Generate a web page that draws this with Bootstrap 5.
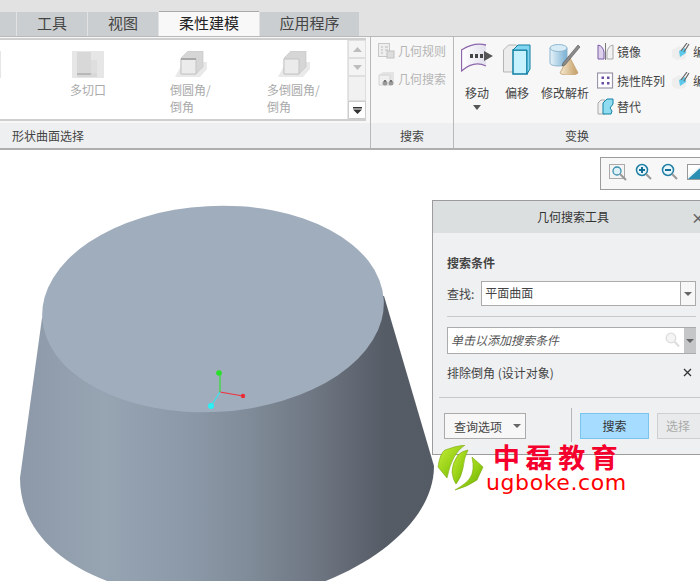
<!DOCTYPE html>
<html lang="zh">
<head>
<meta charset="utf-8">
<title>柔性建模</title>
<link href="https://cdn.jsdelivr.net/npm/bootstrap@5.3.0/dist/css/bootstrap.min.css" rel="stylesheet">
<style>
html,body{height:581px;overflow:hidden;background:#fff}
body{font:12px/17px "Noto Sans CJK SC","Liberation Sans",sans-serif;color:#444}
.app{width:700px;height:581px;overflow:hidden}
.tabstrip{height:37px;flex:none;background:#e2e2e2;padding-top:12px;border-bottom:1px solid #b9b9b9;gap:1px}
.tabx{height:24px;background:#cbced1;font-size:15px;line-height:22px;text-align:center;color:#444}
.tabx.on{background:#f8f8f8;color:#222;border-top:1px solid #a9a9a9;height:25px;margin-top:-1px}
.w0{width:16px}.w1{width:70px}.w2{width:100px}.w3{width:99px}
.rib{height:113px;flex:none;background:#f7f7f7;border-bottom:2px solid #aeaeae}
.grp{border-right:1px solid #b9b9b9;flex:none}
.g1{width:371px}.g2{width:83px}.g3{width:246px;border-right:0;overflow:hidden}
.grpb{height:86px}
.grpf{height:25px;background:#eeeff0;text-align:center;line-height:25px}
.g1 .grpf{text-align:left;padding-left:12px}
.gal{width:366px;height:83px;margin-top:1px;border-top:2px solid #cfcfcf;border-bottom:2px solid #cfcfcf;background:#fff}
.gitems{width:347px;padding:11px 0 0 70px;color:#aaa;position:relative}
.gitems::before{content:"";position:absolute;left:0;top:11px;width:1px;height:27px;background:#e6e6e6}
.gi svg{display:block;margin-bottom:3px}
.a1{width:100px}.a1 svg{margin-left:2px}
.a2{width:97px}.a2 svg{margin-left:5px}
.a3{width:70px}.a3 svg{margin-left:11px}
.gi div{white-space:nowrap}
.sbar{width:19px;border-left:1px solid #e6e6e6}
.sb{background:#f4f4f4;border:1px solid #dedede;height:18px;flex:none}
.sb.thumb{background:#f1f1f1;flex:1}
.sb.last{background:#fff;border-color:#ccc}
.sb svg{display:block}
.sm{gap:11px;padding:5px 0 0 7px;color:#b5b5b5}
.lrow{gap:3px;height:17px;white-space:nowrap}
.lrow svg{flex:none}
.bigs{padding-top:6px;flex:none}
.bg{text-align:center;white-space:nowrap}
.bg svg{display:block;margin:0 auto 9px}
.b1{width:32px;margin-left:7px;margin-right:10px}
.b2{width:28px;margin-right:10px}
.b3{width:48px;margin-right:8px}
.cl .lrow{height:28px}
.cl .lrow.r2{height:30px}
.cl .lrow.r3{height:22px}
.cl1{width:75px;flex:none}
.stage{height:431px;overflow:hidden}
.cad{display:block}
.vbar{position:absolute;left:600px;top:7px;width:110px;height:33px;border:1px solid #9c9c9c;background:#f7f7f7;padding:5px 0 0 8px;gap:8px}
.dlg{position:absolute;left:432px;top:50px;width:282px;height:255px;border:1px solid #9c9c9c;background:#eef0f2}
.dh{height:32px;background:#dcdfe0;text-align:center;line-height:32px;color:#333}
.dx{position:absolute;left:258px;top:8px;font-size:14px;line-height:16px;font-weight:700;color:#666}
.db{padding:21px 17px 0 14px}
.gp10{margin-top:10px}
.fld{background:#fff;border:1px solid #ababab;height:25px}
.fld.tall{height:27px}
.fld span{padding-left:3px;line-height:22px}
.fld.tall span{line-height:23px}
.lbl{flex:none;margin-right:7px;margin-top:-1px}
.arw{width:15px;border-left:1px solid #ababab;background:#f7f7f7}
.tri{width:0;height:0;border-left:4px solid transparent;border-right:4px solid transparent;border-top:4px solid #666;display:inline-block}
.rule{height:1px;background:#c6c8ca}
.ph{font-style:italic;color:#555}
.gcell{width:12px;background:#c4c6c8;margin-right:-1px}
.dr2{margin:16px 0 15px 6px}
.dfoot{padding-left:11px}
.qbtn{width:82px;height:26px;flex:none;background:#f7f7f7;border:1px solid #ababab;padding:0 4px 0 9px;line-height:23px}
.vs{width:1px;height:34px;flex:none;background:#b4b6b8;margin:-5px 8px 0 45px}
.sbtn{width:69px;height:26px;flex:none;background:#a5dcff;border:1px solid #7cc4f0;text-align:center;line-height:23px;color:#333}
.dbtn{width:60px;height:26px;flex:none;margin-left:8px;background:#e9eaeb;border:1px solid #cfcfcf;text-align:left;padding-left:8px;line-height:23px;color:#aaa}
.lg{position:absolute;left:437px;top:295px;width:48px;height:46px}
.lcn{position:absolute;left:493px;top:288px;font-size:27px;line-height:38px;font-weight:700;letter-spacing:5.6px;color:#f5002d;white-space:nowrap}
.lur{position:absolute;left:486px;top:318px;font-family:"DejaVu Sans",sans-serif;font-size:22px;line-height:30px;letter-spacing:.6px;color:#f00;white-space:nowrap}
</style>
</head>
<body>
<div class="app d-flex flex-column">
  <div class="tabstrip d-flex">
    <div class="tabx w0"></div>
    <div class="tabx w1">工具</div>
    <div class="tabx w1">视图</div>
    <div class="tabx w2 on">柔性建模</div>
    <div class="tabx w3">应用程序</div>
  </div>
  <div class="rib d-flex">
    <div class="grp g1 d-flex flex-column">
      <div class="grpb">
        <div class="gal d-flex">
          <div class="gitems d-flex">
            <div class="gi a1">
              <svg width="32" height="27" viewBox="0 0 32 27"><rect width="32" height="27" fill="#e6e6e6"/><path d="M5 1h14v8h6v17H5z" fill="#d8d8d8"/><path d="M5 22h14v2H5z" fill="#b8b8b8"/><path d="M19 9h6v13h-6z" fill="#dedede"/></svg>
              <div>多切口</div>
            </div>
            <div class="gi a2">
              <svg width="32" height="27" viewBox="0 0 32 27"><path d="M0 26l8-15h24v7l-7 8z" fill="#e9e9e9"/><path d="M6 7l7-7h15v16l-7 7H6z" fill="#d6d6d6" stroke="#c4c4c4" stroke-width=".6"/><path d="M6 8h15v15H6z" fill="#ebebeb" stroke="#c4c4c4"/><path d="M6 8h15" stroke="#a9a9a9" stroke-width="2"/></svg>
              <div>倒圆角/</div><div>倒角</div>
            </div>
            <div class="gi a3">
              <svg width="32" height="27" viewBox="0 0 32 27"><path d="M0 26l8-15h24v7l-7 8z" fill="#e9e9e9"/><path d="M6 7l7-7h15v16l-7 7H6z" fill="#d6d6d6" stroke="#c4c4c4" stroke-width=".6"/><path d="M6 8h15v15H6z" fill="#ebebeb" stroke="#c4c4c4"/></svg>
              <div>多倒圆角/</div><div>倒角</div>
            </div>
          </div>
          <div class="sbar d-flex flex-column">
            <div class="sb d-flex align-items-center justify-content-center"><svg width="9" height="5"><path d="M0 5l4.500-5L9 5z" fill="#bdbdbd"/></svg></div>
            <div class="sb d-flex align-items-center justify-content-center"><svg width="9" height="5"><path d="M0 0l4.500 5L9 0z" fill="#bdbdbd"/></svg></div>
            <div class="sb thumb"></div>
            <div class="sb last d-flex align-items-center justify-content-center"><svg width="9" height="7"><path d="M0 0h9v1.500H0zM0 2.500h9L4.500 7z" fill="#333"/></svg></div>
          </div>
        </div>
      </div>
      <div class="grpf">形状曲面选择</div>
    </div>
    <div class="grp g2 d-flex flex-column">
      <div class="grpb sm d-flex flex-column">
        <div class="lrow d-flex align-items-center"><svg width="17" height="16" viewBox="0 0 17 16"><rect x=".5" y=".5" width="11" height="13" fill="#eee" stroke="#c8c8c8"/><path d="M3 4h2M3 7h2M3 10h2M7 4h3M7 7h3" stroke="#bbb"/><rect x="9" y="8" width="7" height="7" fill="#ddd" stroke="#c2c2c2"/></svg><span>几何规则</span></div>
        <div class="lrow d-flex align-items-center"><svg width="17" height="16" viewBox="0 0 17 16"><path d="M1 4l4-3h11v10l-4 3H1z" fill="#e4e4e4"/><path d="M1 4h11v10H1z" fill="#efefef" stroke="#d4d4d4"/><circle cx="7" cy="12" r="2.500" fill="#999"/><circle cx="13" cy="12" r="2.500" fill="#999"/><path d="M6 9h2v2H6zM12 9h2v2h-2z" fill="#777"/></svg><span>几何搜索</span></div>
      </div>
      <div class="grpf">搜索</div>
    </div>
    <div class="grp g3 d-flex flex-column">
      <div class="grpb d-flex">
        <div class="bigs d-flex">
          <div class="bg b1">
            <svg width="32" height="32" viewBox="0 0 32 32"><defs><linearGradient id="mv" x1="0" x2="1"><stop offset="0" stop-color="#fff"/><stop offset="1" stop-color="#e2e0ec"/></linearGradient></defs><path d="M.5 7Q13-1 25 2V23Q13 17 .5 28z" fill="url(#mv)"/><path d="M25 2Q13-1 .5 7V28Q13 17 25 23" fill="none" stroke="#8d67ad" stroke-width="1.300"/><path d="M9 11h3v4H9zM14 11h3v4h-3zM19 11h3v4h-3z" fill="#444"/><path d="M23 8l9 5-9 5z" fill="#555"/></svg>
            <div>移动</div>
            <svg class="mt-1" width="8" height="5"><path d="M0 0h8L4 5z" fill="#555"/></svg>
          </div>
          <div class="bg b2">
            <svg width="28" height="32" viewBox="0 0 28 32"><path d="M.5 7l5-5h8v27H.5z" fill="#ececec" stroke="#b5b5b5"/><path d="M10 7h14v24H10z" fill="#c6f2ff" stroke="#0f7fa3" stroke-width="1.500"/><path d="M10 7l5-5h12v24l-3 5V7z" fill="#82d5ee" stroke="#0f7fa3"/></svg>
            <div>偏移</div>
          </div>
          <div class="bg b3">
            <svg width="32" height="32" viewBox="0 0 32 32"><defs><linearGradient id="cy" x1="0" x2="1"><stop offset="0" stop-color="#e6f3fa"/><stop offset="1" stop-color="#79afd2"/></linearGradient><linearGradient id="cn" x1="0" x2="1"><stop offset="0" stop-color="#f7ead2"/><stop offset="1" stop-color="#c39c63"/></linearGradient></defs><path d="M1 5v15c0 4 17 4 17 0V5z" fill="url(#cy)" stroke="#8fb6cf"/><ellipse cx="9.500" cy="5" rx="8.500" ry="3.500" fill="#d7ecf7" stroke="#8fb6cf"/><path d="M11 30L20 13l9 17c-3 3-15 3-18 0z" fill="url(#cn)" stroke="#c9ab7c"/><path d="M14 20L29 2l2 2-15 18-3 1z" fill="#8a8a8a" stroke="#555" stroke-width=".6"/></svg>
            <div>修改解析</div>
          </div>
        </div>
        <div class="cl cl1 d-flex flex-column">
          <div class="lrow d-flex align-items-center"><svg width="17" height="17" viewBox="0 0 17 17"><path d="M1 2q5 1 6 7v7H1z" fill="#dcd2ec" stroke="#7a5aa6"/><path d="M16 2q-5 1-6 7v7h6z" fill="#f2f2f2" stroke="#a8a8a8"/><path d="M8.500 0v17" stroke="#777"/></svg><span>镜像</span></div>
          <div class="lrow r2 d-flex align-items-center"><svg width="17" height="17" viewBox="0 0 17 17"><rect x=".5" y="1" width="15" height="15" fill="#fff" stroke="#9a94a8" stroke-width="1.200"/><path d="M4.500 4.500h2.500v2.500H4.500zM10 4.500h2.500v2.500H10zM4.500 10h2.500v2.500H4.500zM10 10h2.500v2.500H10z" fill="#6d4ea5"/></svg><span>挠性阵列</span></div>
          <div class="lrow r3 d-flex align-items-center"><svg width="17" height="17" viewBox="0 0 17 17"><path d="M1 5l3-3h4v14H1z" fill="#eee" stroke="#aaa"/><path d="M6 5l4-4h6v5l-3 4 2 3-1 3H6z" fill="#8fdcf0" stroke="#1382a5"/></svg><span>替代</span></div>
        </div>
        <div class="cl d-flex flex-column">
          <div class="lrow d-flex align-items-center"><svg width="18" height="17" viewBox="0 0 18 17"><path d="M0 7l7-4 8 5-2 8-8 1-5-3z" fill="#eee"/><path d="M7 8l6-3 1 5-6 4z" fill="#5cc9ea"/><path d="M9 8l6-8M12 9l5-8" stroke="#666" stroke-width="1.200"/></svg><span>编辑倒圆角</span></div>
          <div class="lrow r2 d-flex align-items-center"><svg width="18" height="17" viewBox="0 0 18 17"><path d="M0 7l7-4 8 5-2 8-8 1-5-3z" fill="#eee"/><path d="M7 8l6-3 1 5-6 4z" fill="#5cc9ea"/><path d="M9 8l6-8M12 9l5-8" stroke="#666" stroke-width="1.200"/></svg><span>编辑倒角</span></div>
        </div>
      </div>
      <div class="grpf">变换</div>
    </div>
  </div>
  <div class="stage position-relative">
    <svg class="cad" width="700" height="431" viewBox="0 150 700 431">
      <defs>
        <linearGradient id="side" gradientUnits="userSpaceOnUse" x1="20" y1="0" x2="435" y2="0">
          <stop offset="0" stop-color="#8d99a8"/>
          <stop offset=".2" stop-color="#97a4b2"/>
          <stop offset=".4" stop-color="#8c99a8"/>
          <stop offset=".55" stop-color="#808c99"/>
          <stop offset=".72" stop-color="#6d7581"/>
          <stop offset=".88" stop-color="#565c66"/>
          <stop offset="1" stop-color="#555b65"/>
        </linearGradient>
      </defs>
      <path d="M42 318L20 478C20 560 120 601 227 601C320 601 434 540 434 466L384 296z" fill="url(#side)"/>
      <ellipse cx="213" cy="309" rx="171" ry="103" transform="rotate(-3 213 309)" fill="#a0adbd"/>
      <path d="M220 392V374" stroke="#2fe02f" stroke-width="1.200"/>
      <circle cx="219" cy="373" r="2.800" fill="#25e025"/>
      <path d="M220 392l23 4" stroke="#f0323c" stroke-width="1.200"/>
      <circle cx="243" cy="396" r="2.200" fill="#ee2a36"/>
      <path d="M220 392l-9 14" stroke="#35e6f0" stroke-width="1.200"/>
      <circle cx="211" cy="406" r="3" fill="#28f0f5"/>
    </svg>

    <div class="vbar d-flex">
      <svg width="18" height="19" viewBox="0 0 18 19"><rect x=".5" y="1.500" width="15" height="14" fill="#f4f4f4" stroke="#aaa"/><circle cx="8" cy="8" r="4" fill="#dff1f8" stroke="#3a8fb0" stroke-width="1.300"/><path d="M11 11l6 6" stroke="#999" stroke-width="2"/></svg>
      <svg width="18" height="18" viewBox="0 0 18 18"><circle cx="7" cy="7" r="5.500" fill="#e9f6fb" stroke="#1f7fa5" stroke-width="1.500"/><path d="M4 7h6M7 4v6" stroke="#156f94" stroke-width="2"/><path d="M11 11l5 5" stroke="#999" stroke-width="2"/></svg>
      <svg width="18" height="18" viewBox="0 0 18 18"><circle cx="7" cy="7" r="5.500" fill="#e9f6fb" stroke="#1f7fa5" stroke-width="1.500"/><path d="M4 7h6" stroke="#156f94" stroke-width="2"/><path d="M11 11l5 5" stroke="#999" stroke-width="2"/></svg>
      <svg width="18" height="18" viewBox="0 0 18 18"><rect x=".5" y="1.500" width="17" height="15" fill="#eef5f8" stroke="#999"/><path d="M1 16L12 6l5-4v14z" fill="#2a8fb3"/><path d="M1 2h14L1 13z" fill="#fff"/></svg>
    </div>

    <div class="dlg">
      <div class="dh">几何搜索工具</div>
      <div class="dx">×</div>
      <div class="db">
        <div class="fw-bold">搜索条件</div>
        <div class="d-flex align-items-center gp10">
          <span class="lbl">查找:</span>
          <div class="fld d-flex flex-grow-1 justify-content-between"><span>平面曲面</span><div class="arw d-flex align-items-center justify-content-center"><i class="tri"></i></div></div>
        </div>
        <div class="rule gp10"></div>
        <div class="fld tall d-flex justify-content-between gp10">
          <span class="ph">单击以添加搜索条件</span>
          <div class="d-flex">
            <svg class="mt-1 me-1" width="15" height="16" viewBox="0 0 15 16"><circle cx="6" cy="6" r="4.800" fill="#f4f4f4" stroke="#ddd" stroke-width="1.300"/><path d="M9.500 9.500l4.500 5" stroke="#ddd" stroke-width="2"/></svg>
            <div class="gcell d-flex align-items-center justify-content-center"><i class="tri"></i></div>
          </div>
        </div>
        <div class="d-flex justify-content-between gp10"><span>排除倒角 (设计对象)</span><svg class="mt-1 me-1" width="9" height="9" viewBox="0 0 9 9"><path d="M1 1l7 7M8 1L1 8" stroke="#333" stroke-width="1.300"/></svg></div>
      </div>
      <div class="rule dr2"></div>
      <div class="d-flex dfoot">
        <div class="qbtn d-flex justify-content-between align-items-center"><span>查询选项</span><i class="tri"></i></div>
        <div class="vs"></div>
        <div class="sbtn">搜索</div>
        <div class="dbtn">选择</div>
      </div>
    </div>

    <svg class="lg" viewBox="0 0 48 46">
      <defs><linearGradient id="lf" x1="0" y1="0" x2="1" y2="1"><stop offset="0" stop-color="#c8ee3a"/><stop offset=".55" stop-color="#95d015"/><stop offset="1" stop-color="#66a506"/></linearGradient></defs>
      <path d="M1 22Q3 8 8 5Q18 1 28 0Q15 8 10 33z" fill="url(#lf)" stroke="#7aa80c" stroke-width=".6"/>
      <path d="M31 5Q25 6 21 10Q15 18 15 27Q16 35 19 39Q24 33 26 23Q27 13 31 5z" fill="url(#lf)" stroke="#7aa80c" stroke-width=".6"/>
      <path d="M35 12L46 22L40 35Q30 42 18 45Q30 38 33 33Q38 26 35 12z" fill="url(#lf)" stroke="#7aa80c" stroke-width=".6"/>
    </svg>
    <div class="lcn">中磊教育</div>
    <div class="lur">ugboke.com</div>
  </div>
</div>
</body>
</html>
